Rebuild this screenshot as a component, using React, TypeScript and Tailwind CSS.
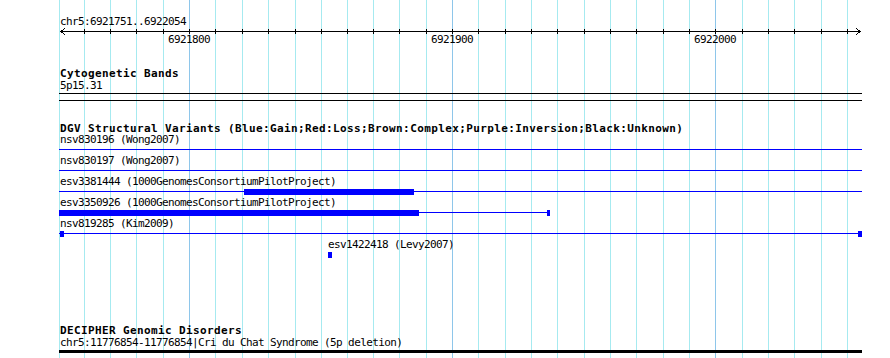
import React from "react";

const GRID = [59, 84, 110, 136, 163, 189, 215, 242, 268, 295, 321, 347, 373, 399, 426, 452, 478, 505, 531, 557, 584, 610, 636, 663, 689, 715, 742, 768, 794, 821, 847];
const MAJOR = [189, 452, 715];
const LABELS = [
  { x: 189, t: "6921800" },
  { x: 452, t: "6921900" },
  { x: 715, t: "6922000" },
];

const ORIGIN = 59;

type Bar = { x1: number; x2: number; kind: "thick" | "thin" | "block" };
type Row = { label: string; labelX: number; fullLine: boolean; bars: Bar[] };

const ROWS: Row[] = [
  { label: "nsv830196 (Wong2007)", labelX: 60, fullLine: true, bars: [] },
  { label: "nsv830197 (Wong2007)", labelX: 60, fullLine: true, bars: [] },
  {
    label: "esv3381444 (1000GenomesConsortiumPilotProject)",
    labelX: 60,
    fullLine: true,
    bars: [{ x1: 244, x2: 413, kind: "thick" }],
  },
  {
    label: "esv3350926 (1000GenomesConsortiumPilotProject)",
    labelX: 60,
    fullLine: false,
    bars: [
      { x1: 59, x2: 418, kind: "thick" },
      { x1: 419, x2: 547, kind: "thin" },
      { x1: 547, x2: 549, kind: "block" },
    ],
  },
  {
    label: "nsv819285 (Kim2009)",
    labelX: 60,
    fullLine: true,
    bars: [
      { x1: 60, x2: 63, kind: "block" },
      { x1: 858, x2: 861, kind: "block" },
    ],
  },
  {
    label: "esv1422418 (Levy2007)",
    labelX: 328,
    fullLine: false,
    bars: [{ x1: 328, x2: 331, kind: "block" }],
  },
];

const small = "font-['DejaVu_Sans_Mono',monospace] text-[11px] tracking-[-0.62px] leading-[12px] text-black whitespace-nowrap";
const bold = "font-['DejaVu_Sans_Mono',monospace] text-[11px] font-bold tracking-[0.38px] text-black whitespace-nowrap";

function FeatureRow({ row }: { row: Row }) {
  return (
    <div className="relative h-[21px]">
      <div className={small} style={{ paddingLeft: row.labelX - ORIGIN }}>
        {row.label}
      </div>
      <div className="absolute left-0 right-0 top-[13px] h-[6px]">
        {row.fullLine && <div className="absolute left-0 right-0 top-[2px] h-px bg-[#0000ff]" />}
        {row.bars.map((b, i) => {
          const left = b.x1 - ORIGIN;
          const width = b.x2 - b.x1 + 1;
          if (b.kind === "thin") {
            return <div key={i} className="absolute top-[2px] h-px bg-[#0000ff]" style={{ left, width }} />;
          }
          return <div key={i} className="absolute top-0 h-[6px] bg-[#0000ff]" style={{ left, width }} />;
        })}
      </div>
    </div>
  );
}

export default function App() {
  return (
    <div className="relative w-[890px] h-[358px] overflow-hidden bg-white">
      <svg className="absolute inset-0" width={890} height={358} shapeRendering="crispEdges">
        {GRID.map((x) => (
          <rect key={x} x={x} y={0} width={1} height={358} fill={MAJOR.includes(x) ? "#8ec6ea" : "#a6eaf0"} />
        ))}
      </svg>

      <div className="relative flex flex-col">
        {/* ruler */}
        <div className={`${small} mt-[16px] h-[12px] pl-[60px]`}>chr5:6921751..6922054</div>
        <div className="relative h-[39px]">
          <svg className="absolute left-0 top-0" width={890} height={8} shapeRendering="crispEdges">
            <rect x={60} y={3} width={801} height={1} fill="#000" />
            {GRID.filter((x) => x > 60).map((x) => (
              <rect key={x} x={x} y={1} width={1} height={5} fill="#000" />
            ))}
            <polyline points="65,0 61,3.5 65,7" fill="none" stroke="#000" strokeWidth={1} />
            <polyline points="856,0 860,3.5 856,7" fill="none" stroke="#000" strokeWidth={1} />
          </svg>
          {LABELS.map((l) => (
            <div key={l.t} className={`${small} absolute top-[6px]`} style={{ left: l.x - 21 }}>
              {l.t}
            </div>
          ))}
        </div>

        {/* Cytogenetic bands */}
        <div className="ml-[59px] w-[803px] flex flex-col">
          <div className={`${bold} h-[13px] leading-[13px] pl-[1px]`}>Cytogenetic Bands</div>
          <div className={`${small} h-[12px] pl-[1px]`}>5p15.31</div>
          <div className="mt-px h-[8px] border-y border-black" />
        </div>

        {/* DGV */}
        <div className="ml-[59px] w-[803px] mt-[21px] flex flex-col">
          <div className={`${bold} h-[12px] leading-[11px] pt-px pl-[1px]`}>
            DGV Structural Variants (Blue:Gain;Red:Loss;Brown:Complex;Purple:Inversion;Black:Unknown)
          </div>
          {ROWS.map((r) => (
            <FeatureRow key={r.label} row={r} />
          ))}
        </div>

        {/* DECIPHER */}
        <div className="ml-[59px] w-[803px] mt-[64px] flex flex-col">
          <div className={`${bold} h-[13px] leading-[13px] pl-[1px]`}>DECIPHER Genomic Disorders</div>
          <div className={`${small} h-[12px] pl-[1px]`}>chr5:11776854-11776854|Cri du Chat Syndrome (5p deletion)</div>
          <div className="mt-px h-[3px] bg-black" />
        </div>
      </div>
    </div>
  );
}
